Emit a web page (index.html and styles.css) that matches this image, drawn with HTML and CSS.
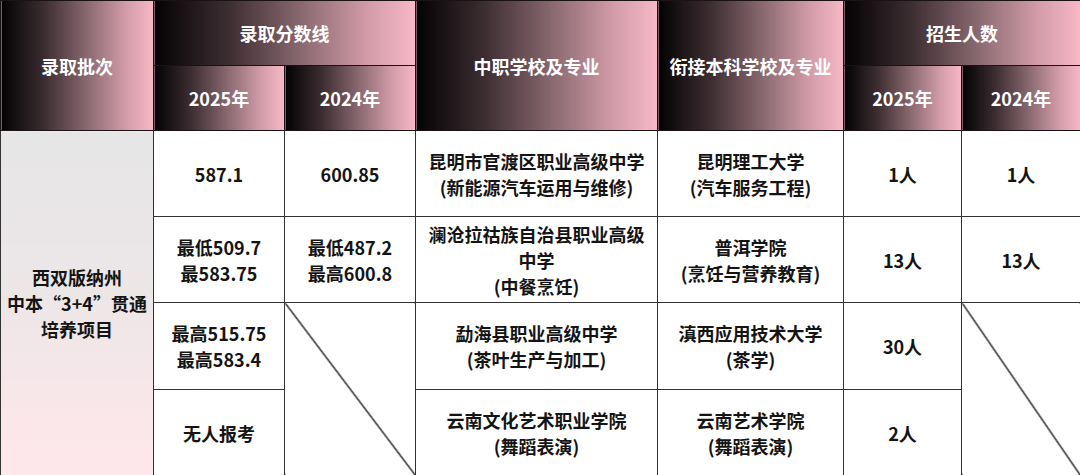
FILE: index.html
```html
<!DOCTYPE html>
<html lang="zh-CN">
<head>
<meta charset="utf-8">
<link rel="stylesheet" href="styles.css">
</head>
<body>
<table class="score-table">
  <colgroup>
    <col class="c1"><col class="c2"><col class="c3"><col class="c4"><col class="c5"><col class="c6"><col class="c7">
  </colgroup>
  <thead>
    <tr class="h1">
      <th rowspan="2">录取批次</th>
      <th colspan="2">录取分数线</th>
      <th rowspan="2">中职学校及专业</th>
      <th rowspan="2">衔接本科学校及专业</th>
      <th colspan="2">招生人数</th>
    </tr>
    <tr class="h2">
      <th>2025年</th>
      <th>2024年</th>
      <th>2025年</th>
      <th>2024年</th>
    </tr>
  </thead>
  <tbody>
    <tr class="r1">
      <td rowspan="4" class="batch">西双版纳州<br>中本“3+4”贯通<br>培养项目</td>
      <td>587.1</td>
      <td>600.85</td>
      <td>昆明市官渡区职业高级中学<br>(新能源汽车运用与维修)</td>
      <td>昆明理工大学<br>(汽车服务工程)</td>
      <td>1人</td>
      <td>1人</td>
    </tr>
    <tr class="r2">
      <td>最低509.7<br>最583.75</td>
      <td>最低487.2<br>最高600.8</td>
      <td>澜沧拉祜族自治县职业高级<br>中学<br>(中餐烹饪)</td>
      <td>普洱学院<br>(烹饪与营养教育)</td>
      <td>13人</td>
      <td>13人</td>
    </tr>
    <tr class="r3">
      <td>最高515.75<br>最高583.4</td>
      <td rowspan="2" class="diag"></td>
      <td>勐海县职业高级中学<br>(茶叶生产与加工)</td>
      <td>滇西应用技术大学<br>(茶学)</td>
      <td>30人</td>
      <td rowspan="2" class="diag"></td>
    </tr>
    <tr class="r4">
      <td>无人报考</td>
      <td>云南文化艺术职业学院<br>(舞蹈表演)</td>
      <td>云南艺术学院<br>(舞蹈表演)</td>
      <td>2人</td>
    </tr>
  </tbody>
</table>
</body>
</html>
```
FILE: styles.css
```css
html, body {
  margin: 0;
  padding: 0;
  background: #ffffff;
}

.score-table {
  width: 1080px;
  height: 475px;
  border-collapse: collapse;
  table-layout: fixed;
  font-family: "Noto Sans CJK SC", "Microsoft YaHei", sans-serif;
  font-weight: 700;
  font-size: 18px;
  line-height: 26px;
  color: #141414;
}

.c1 { width: 153px; }
.c2 { width: 131px; }
.c3 { width: 131px; }
.c4 { width: 242px; }
.c5 { width: 186px; }
.c6 { width: 118px; }
.c7 { width: 119px; }

.score-table th,
.score-table td {
  border: 1px solid #333333;
  padding: 0;
  text-align: center;
  vertical-align: middle;
}

.score-table th {
  color: #ffffff;
  font-weight: 700;
  background: linear-gradient(to right, #030203 0%, #3c2d31 28%, #8e6c74 58%, #d29ca8 82%, #f8b8c6 100%);
  border-color: #1a1214;
}

.h1 { height: 65px; }
.h2 { height: 65px; }
.r1 { height: 86px; }
.r2 { height: 86px; }
.r3 { height: 87px; }
.r4 { height: 86px; }

.batch {
  background: linear-gradient(to bottom, #e6e6e6 0%, #ece6e7 45%, #ffe7eb 100%);
}

.diag {
  background: linear-gradient(to top right, transparent calc(50% - 1px), #1e1e1e calc(50% - 0.4px), #1e1e1e calc(50% + 0.4px), transparent calc(50% + 1px));
}
```
